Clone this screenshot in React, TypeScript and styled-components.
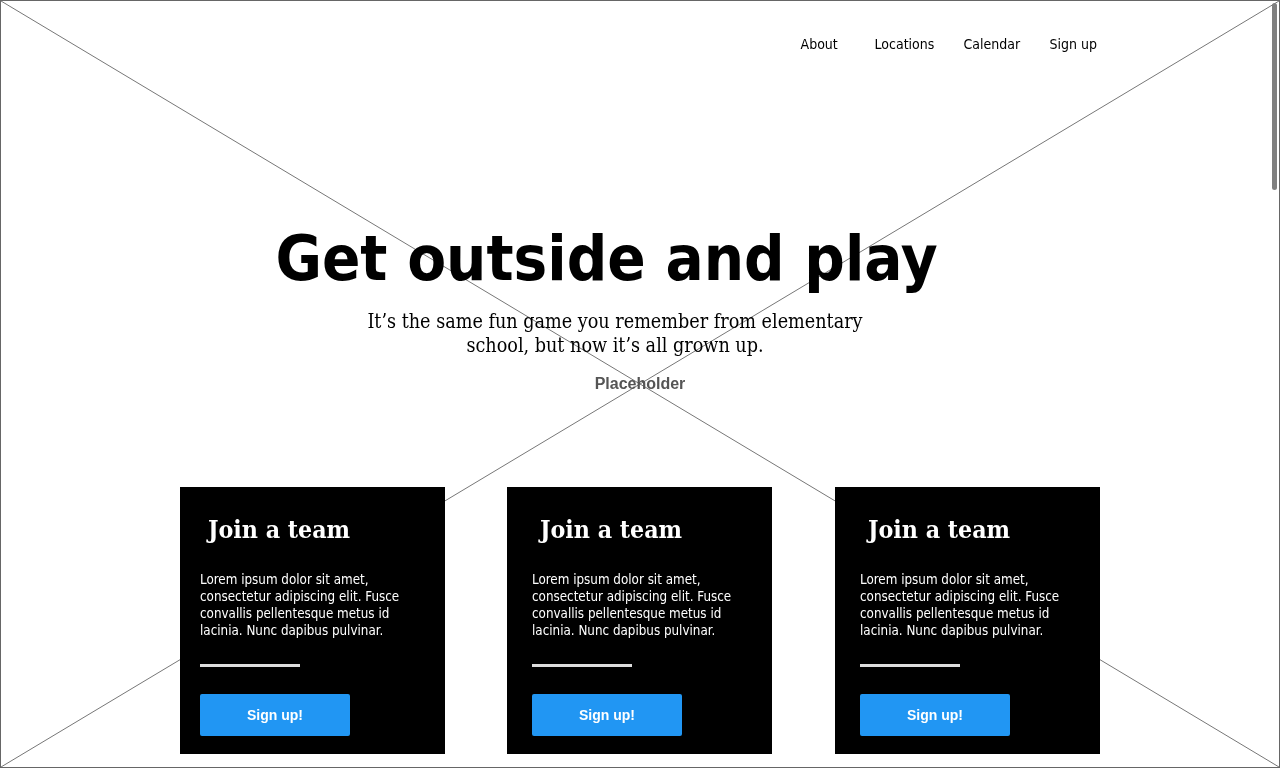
import React from "react";
import styled, { createGlobalStyle } from "styled-components";

const GlobalStyle = createGlobalStyle`
  html, body {
    margin: 0;
    padding: 0;
    background: #fff;
    overflow: hidden;
  }
  * {
    box-sizing: border-box;
  }
`;

// Wireframe placeholder behind the page (frame + cross)
const Backdrop = styled.div`
  position: fixed;
  inset: 0;
  border: 1px solid #666;
  z-index: 0;
  pointer-events: none;
`;

const ScrollThumb = styled.div`
  position: fixed;
  top: 3px;
  right: 3px;
  width: 5px;
  height: 187px;
  border-radius: 3px;
  background: #808080;
  z-index: 2;
`;

const Page = styled.div`
  position: relative;
  z-index: 1;
  width: 1280px;
  height: 768px;
`;

const Nav = styled.nav`
  display: grid;
  grid-template-columns: 74px 89px 86px auto;
  justify-content: end;
  padding: 35px 183px 0 0;
`;

const NavLink = styled.a`
  font-family: "DejaVu Sans Condensed", "DejaVu Sans", sans-serif;
  font-stretch: condensed;
  font-size: 14px;
  line-height: 18px;
  color: #000;
  text-decoration: none;
`;

const Hero = styled.section`
  display: flex;
  flex-direction: column;
  align-items: center;
`;

const Heading = styled.h1`
  margin: 174px 67px 0 0;
  font-family: "DejaVu Sans Condensed", "DejaVu Sans", sans-serif;
  font-stretch: condensed;
  font-weight: 700;
  font-size: 63px;
  line-height: 63px;
  color: #000;
`;

const Subtitle = styled.p`
  margin: 20px 50px 0 0;
  width: 530px;
  text-align: center;
  font-family: "DejaVu Serif Condensed", "DejaVu Serif", serif;
  font-stretch: condensed;
  font-size: 19.6px;
  line-height: 24px;
  color: #000;
`;

const Placeholder = styled.div`
  margin-top: 17px;
  font-family: "Liberation Sans", Arial, sans-serif;
  font-weight: 700;
  font-size: 16px;
  line-height: 18px;
  color: #555;
`;

const CardRow = styled.div`
  display: flex;
  gap: 62px;
  margin-top: 94px;
  padding-left: 180px;
`;

const Card = styled.article<{ $inset: number; $shift: number }>`
  display: flex;
  flex-direction: column;
  align-items: flex-start;
  width: 265px;
  height: 267px;
  margin-left: ${(p) => p.$shift}px;
  padding: 28px 0 18px ${(p) => p.$inset}px;
  background: #000;
  color: #fff;
`;

const CardTitle = styled.h2`
  margin: 0;
  padding-left: 8px;
  font-family: "DejaVu Serif Condensed", "DejaVu Serif", serif;
  font-stretch: condensed;
  font-weight: 700;
  font-size: 24.7px;
  line-height: 30px;
`;

const CardText = styled.p`
  margin: 26px 0 0;
  width: 212px;
  font-family: "DejaVu Sans Condensed", "DejaVu Sans", sans-serif;
  font-stretch: condensed;
  font-size: 13.3px;
  line-height: 17px;
`;

const Divider = styled.hr`
  margin: 25px 0 0;
  width: 100px;
  height: 3px;
  border: none;
  background: #ddd;
`;

const SignUpButton = styled.button`
  margin-top: 27px;
  width: 150px;
  height: 42px;
  border: none;
  border-radius: 2px;
  background: #2196f3;
  color: #fff;
  font-family: "Liberation Sans", Arial, sans-serif;
  font-weight: 700;
  font-size: 14px;
  cursor: pointer;
`;

const Cross = () => (
  <svg width="100%" height="100%" viewBox="0 0 1278 766" preserveAspectRatio="none">
    <line x1="0" y1="0" x2="1278" y2="766" stroke="#777" strokeWidth="1" />
    <line x1="1278" y1="0" x2="0" y2="766" stroke="#777" strokeWidth="1" />
  </svg>
);

const cards = [
  { inset: 20, shift: 0 },
  { inset: 25, shift: 0 },
  { inset: 25, shift: 1 },
];

export default function App() {
  return (
    <>
      <GlobalStyle />
      <Backdrop>
        <Cross />
      </Backdrop>
      <ScrollThumb />
      <Page>
        <Nav>
          <NavLink href="#">About</NavLink>
          <NavLink href="#">Locations</NavLink>
          <NavLink href="#">Calendar</NavLink>
          <NavLink href="#">Sign up</NavLink>
        </Nav>
        <Hero>
          <Heading>Get outside and play</Heading>
          <Subtitle>
            It’s the same fun game you remember from elementary school, but now it’s all grown up.
          </Subtitle>
          <Placeholder>Placeholder</Placeholder>
        </Hero>
        <CardRow>
          {cards.map((c, i) => (
            <Card key={i} $inset={c.inset} $shift={c.shift}>
              <CardTitle>Join a team</CardTitle>
              <CardText>
                Lorem ipsum dolor sit amet, consectetur adipiscing elit. Fusce convallis pellentesque
                metus id lacinia. Nunc dapibus pulvinar.
              </CardText>
              <Divider />
              <SignUpButton>Sign up!</SignUpButton>
            </Card>
          ))}
        </CardRow>
      </Page>
    </>
  );
}
